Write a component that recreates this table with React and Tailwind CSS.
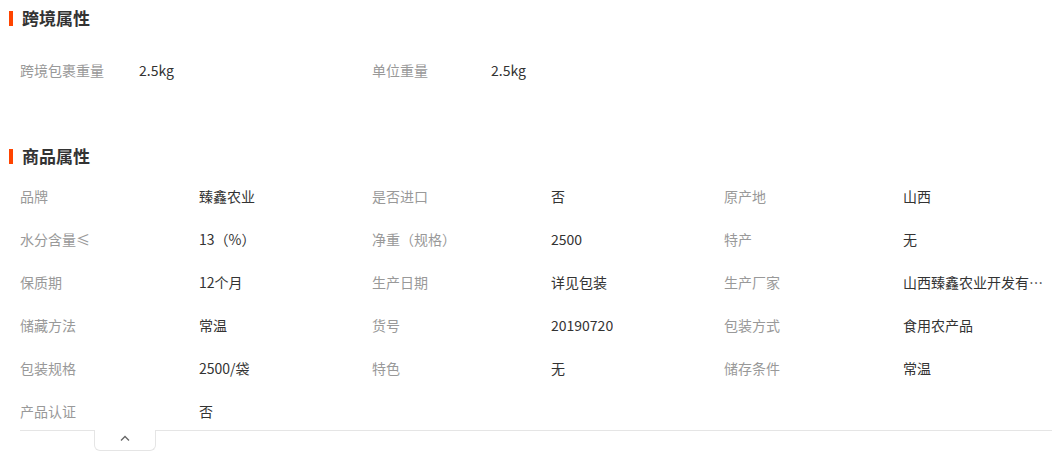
import React from 'react';

const font = { fontFamily: '"Noto Sans CJK SC", "Liberation Sans", sans-serif' };

const crossAttrs = [
  ['跨境包裹重量', '2.5kg'],
  ['单位重量', '2.5kg'],
];

const goodsAttrs = [
  ['品牌', '臻鑫农业'],
  ['是否进口', '否'],
  ['原产地', '山西'],
  ['水分含量≤', '13（%）'],
  ['净重（规格）', '2500'],
  ['特产', '无'],
  ['保质期', '12个月'],
  ['生产日期', '详见包装'],
  ['生产厂家', '山西臻鑫农业开发有限公司'],
  ['储藏方法', '常温'],
  ['货号', '20190720'],
  ['包装方式', '食用农产品'],
  ['包装规格', '2500/袋'],
  ['特色', '无'],
  ['储存条件', '常温'],
  ['产品认证', '否'],
];

const Title = ({ children }) => (
  <div className="flex items-center h-9 pl-[9px]">
    <span className="w-1 h-[15px] bg-[#ff4400] mr-[9px]"></span>
    <span className="text-[17px] font-bold text-[#333]">{children}</span>
  </div>
);

export default function App() {
  return (
    <div className="w-[1052px] h-[455px] bg-white overflow-hidden" style={font}>
      <Title>跨境属性</Title>
      <div className="flex pl-5 mt-3">
        {crossAttrs.map(([k, v]) => (
          <div key={k} className="flex items-center w-[352px] h-[43px] text-sm">
            <span className="w-[119px] text-[#999]">{k}</span>
            <span className="text-[#333]">{v}</span>
          </div>
        ))}
      </div>
      <div className="mt-[47px]">
        <Title>商品属性</Title>
      </div>
      <div className="ml-5 border-b border-[#e5e5e5]">
        <div className="grid grid-cols-[352px_352px_1fr] -mb-[2px]">
          {goodsAttrs.map(([k, v]) => (
            <div key={k} className="flex items-center h-[43px] text-sm min-w-0">
              <span className="w-[179px] shrink-0 text-[#999]">{k}</span>
              <span className="text-[#333] truncate max-w-[140px]">{v}</span>
            </div>
          ))}
        </div>
      </div>
      <div className="ml-[94px] w-[62px] h-[21px] -mt-px border border-t-0 border-[#e5e5e5] rounded-b-md bg-white flex items-start justify-center pt-[5px]">
        <svg width="10" height="6" viewBox="0 0 10 6" fill="none" stroke="#666" strokeWidth="1.3">
          <path d="M1 5.5 L5 1.5 L9 5.5" />
        </svg>
      </div>
    </div>
  );
}
